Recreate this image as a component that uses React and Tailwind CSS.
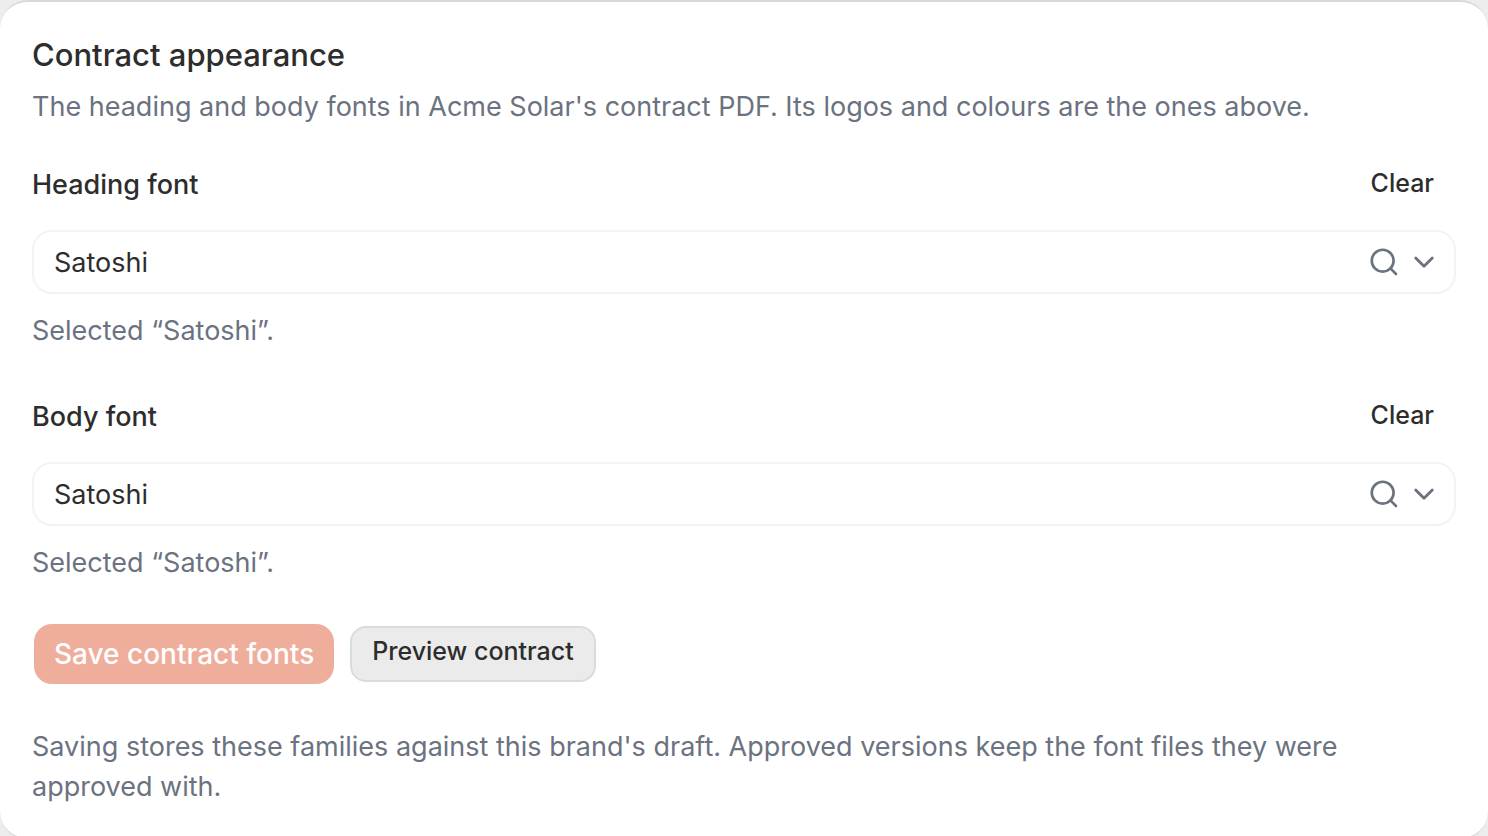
import { useState } from "react";

function FontField({ id, label }) {
  const [value, setValue] = useState("Satoshi");
  return (
    <div className="flex flex-col">
      <div className="flex items-start justify-between pr-[22px]">
        <label htmlFor={id} className="text-[27px] leading-10 font-medium">{label}</label>
        <button type="button" onClick={() => setValue("")} className="text-[25px] leading-9 font-medium">Clear</button>
      </div>
      <div className="mt-[25px] flex h-16 items-center rounded-[20px] border-2 border-[#f3f3f4] pr-3.5 pl-5">
        <input id={id} value={value} onChange={(e) => setValue(e.target.value)} className="h-full min-w-0 flex-1 bg-transparent text-[27px] outline-none" />
        <svg className="size-8 text-[#6b7280]" viewBox="0 0 24 24" fill="none" stroke="currentColor" strokeWidth="2" strokeLinecap="round" aria-hidden="true">
          <circle cx="11" cy="11" r="8.2" />
          <path d="m21 21-4.2-4.2" />
        </svg>
        <svg className="ml-2 size-8 text-[#6b7280]" viewBox="0 0 24 24" fill="none" stroke="currentColor" strokeWidth="2.1" strokeLinecap="round" strokeLinejoin="round" aria-hidden="true">
          <path d="m5.8 9 6.2 6.2L18.2 9" />
        </svg>
      </div>
      <p className="mt-[17px] text-[27px] leading-10 text-[#6b7280]">Selected “{value}”.</p>
    </div>
  );
}

export default function App() {
  return (
    <div className="min-h-screen bg-[#ededed] font-['Inter',sans-serif] text-[#2d2d2d]">
      <section className="rounded-[28px] border-y-2 border-[#d9d9d9] bg-white px-8 pt-[33px] pb-[31px]">
        <h2 className="text-[31px] leading-10 font-medium">Contract appearance</h2>
        <p className="mt-3 text-[27px] leading-10 text-[#6b7280]">The heading and body fonts in Acme Solar's contract PDF. Its logos and colours are the ones above.</p>
        <div className="mt-[38px] flex flex-col gap-[46px]">
          <FontField id="heading-font" label="Heading font" />
          <FontField id="body-font" label="Body font" />
        </div>
        <div className="mt-[41px] flex items-center gap-4 pl-0.5">
          <button type="button" className="h-[60px] rounded-[18px] bg-[#efae9c] px-5 text-[28px] font-medium text-white">Save contract fonts</button>
          <button type="button" className="h-14 rounded-2xl border-2 border-[#d6dde1] bg-[#ebebeb] px-5 pb-1 text-[25px] font-medium">Preview contract</button>
        </div>
        <p className="mt-[43px] text-[27px] leading-10 text-[#6b7280]">Saving stores these families against this brand's draft. Approved versions keep the font files they were approved with.</p>
      </section>
    </div>
  );
}
